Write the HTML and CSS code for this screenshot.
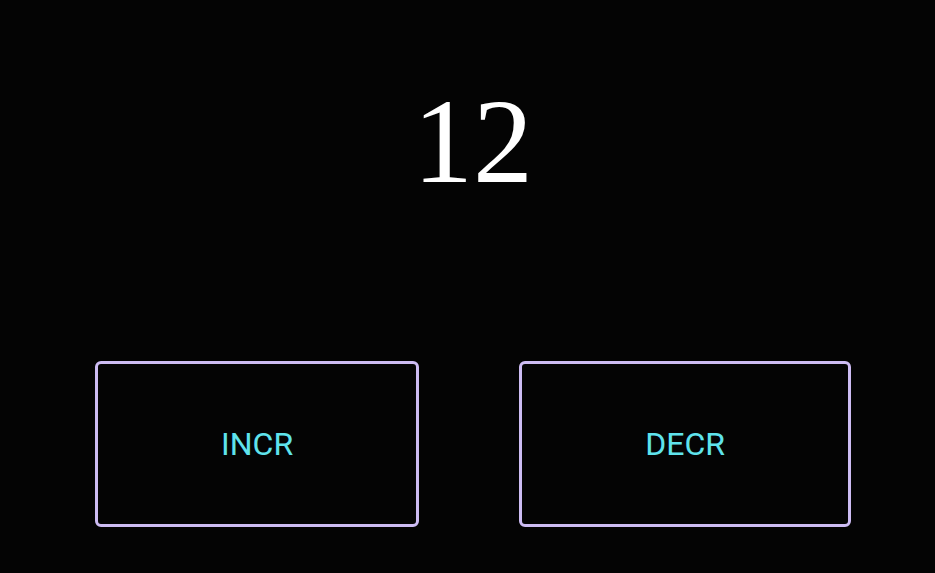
FILE: index.html
```html
<!DOCTYPE html>
<html>
<head>
<meta charset="utf-8">
<link rel="stylesheet" href="styles.css">
</head>
<body>
<main class="app">
  <div class="count">12</div>
  <div class="actions">
    <button class="btn">INCR</button>
    <button class="btn">DECR</button>
  </div>
</main>
</body>
</html>
```
FILE: styles.css
```css
html, body {
  margin: 0;
  padding: 0;
  background: #040404;
  height: 100%;
}
.app {
  display: flex;
  flex-direction: column;
  padding-left: 11px;
  padding-top: 73px;
  box-sizing: border-box;
  height: 573px;
}
.count {
  font-family: "Liberation Serif", "Times New Roman", serif;
  font-size: 120px;
  line-height: normal;
  color: #ffffff;
  text-align: center;
  height: 138px;
}
.actions {
  display: flex;
  gap: 100px;
  padding: 0 84px;
  margin-top: 150px;
}
.btn {
  flex: 1 1 auto;
  height: 166px;
  background: #040404;
  border: 3px solid #cdbcf3;
  border-radius: 6px;
  color: #5fe3ec;
  font-family: Roboto, "Liberation Sans", sans-serif;
  font-size: 32px;
  padding: 0;
  box-sizing: border-box;
}
```
